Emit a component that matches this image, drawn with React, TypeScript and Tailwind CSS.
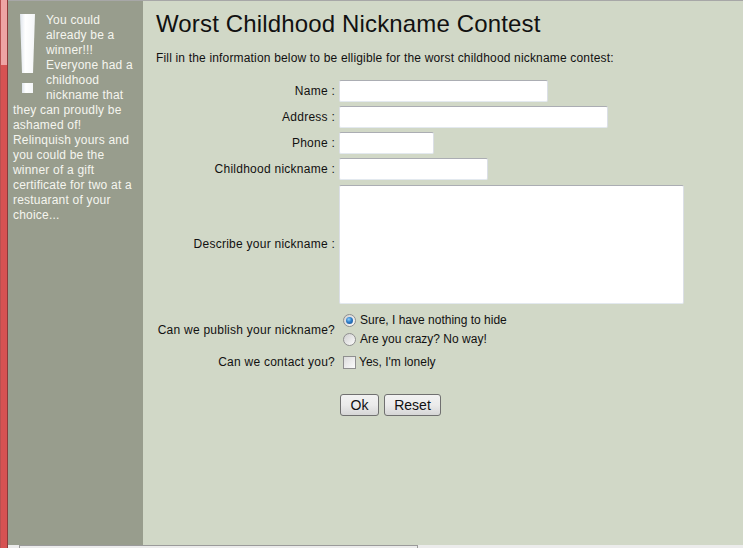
import React from "react";

const inputCls =
  "box-border h-[22px] bg-white border border-t-[#abadb3] border-l-[#dbdfe6] border-r-[#dbdfe6] border-b-[#e3e9ef] rounded-[2px] outline-none";

function Radio({ checked }: { checked?: boolean }) {
  return (
    <span className="ml-[4px] mr-[4px] flex h-[13px] w-[13px] items-center justify-center rounded-full border border-[#8f8f8f] bg-gradient-to-br from-[#d0d0d0] to-[#fbfbfb]">
      {checked && (
        <span className="h-[7px] w-[7px] rounded-full bg-[radial-gradient(circle_at_40%_35%,#8fd0ff_0%,#2d7cc6_45%,#1b4f8c_100%)]" />
      )}
    </span>
  );
}

function Row({ label, children, className = "" }: { label: string; children: React.ReactNode; className?: string }) {
  return (
    <div className={`flex items-center gap-[4px] ${className}`}>
      <div className="w-[179px] text-right text-[12px] leading-[15px] tracking-[0.25px] text-[#111]">{label}</div>
      {children}
    </div>
  );
}

function Bang() {
  return (
    <svg width="33" height="85" viewBox="0 0 33 85" className="float-left">
      <defs>
        <linearGradient id="bang" x1="0" x2="1" y1="0" y2="0">
          <stop offset="0" stopColor="#dfe5ec" />
          <stop offset="0.35" stopColor="#ffffff" />
          <stop offset="1" stopColor="#f4f6f8" />
        </linearGradient>
      </defs>
      <polygon points="7,1 22,1 20,60 9,60" fill="url(#bang)" />
      <rect x="9" y="70" width="11" height="10" fill="url(#bang)" />
    </svg>
  );
}

export default function App() {
  return (
    <div className="flex h-[548px] w-full overflow-hidden font-['Liberation_Sans',Arial,sans-serif]">
      {/* red edge */}
      <div className="flex w-[8px] flex-col border-l border-r border-l-[#b85050] border-r-[#8a3a3a]">
        <div className="h-[65px] bg-[#eea4a4]" />
        <div className="flex-1 bg-[#d65252]" />
      </div>

      <div className="flex flex-1 flex-col">
        <div className="flex flex-1 border-t border-[#a7a7a7]">
          {/* sidebar */}
          <aside className="w-[135px] shrink-0 bg-[#989d8d] pl-[5px] pt-[12px]">
            <div className="w-[124px] text-[12px] leading-[15px] tracking-[0.2px] text-[#f5f5ef]">
              <Bang />
              You could already be a winner!!! Everyone had a childhood nickname that they can proudly be ashamed of!
              Relinquish yours and you could be the winner of a gift certificate for two at a restuarant of your
              choice...
            </div>
          </aside>

          {/* main */}
          <main className="flex-1 bg-[#d1d8c7] pl-[13px] pt-[9px] text-[#111]">
            <h1 className="text-[24px] leading-[28px] font-normal tracking-[0.15px]">Worst Childhood Nickname Contest</h1>
            <p className="mt-[13px] text-[12px] leading-[15px] tracking-[0.17px]">
              Fill in the information below to be elligible for the worst childhood nickname contest:
            </p>

            <form className="mt-[14px] flex flex-col">
              <Row label="Name :">
                <input className={`${inputCls} w-[209px]`} />
              </Row>
              <Row label="Address :" className="mt-[4px]">
                <input className={`${inputCls} w-[269px]`} />
              </Row>
              <Row label="Phone :" className="mt-[4px]">
                <input className={`${inputCls} w-[95px]`} />
              </Row>
              <Row label="Childhood nickname :" className="mt-[4px]">
                <input className={`${inputCls} w-[149px]`} />
              </Row>
              <Row label="Describe your nickname :" className="mt-[5px]">
                <textarea className={`${inputCls} h-[119px] w-[345px] resize-none`} />
              </Row>

              <Row label="Can we publish your nickname?" className="mt-[7px]">
                <div className="flex flex-col text-[12px] leading-[15px]">
                  <label className="flex h-[19px] items-center">
                    <Radio checked />
                    Sure, I have nothing to hide
                  </label>
                  <label className="flex h-[19px] items-center">
                    <Radio />
                    Are you crazy? No way!
                  </label>
                </div>
              </Row>

              <Row label="Can we contact you?" className="mt-[4px]">
                <label className="flex h-[19px] items-center text-[12px] leading-[15px]">
                  <span className="ml-[4px] mr-[3px] h-[13px] w-[13px] border border-[#8f8f8f] bg-gradient-to-br from-[#dcdcdc] to-[#fbfbfb]" />
                  Yes, I'm lonely
                </label>
              </Row>

              <div className="mt-[22px] flex gap-[5px] pl-[184px]">
                <button
                  type="button"
                  className="h-[22px] w-[39px] rounded-[3px] border border-[#707070] bg-gradient-to-b from-[#f2f2f2] via-[#ebebeb] to-[#d6d6d6] text-[14px] leading-[16px] text-[#111]"
                >
                  Ok
                </button>
                <button
                  type="button"
                  className="h-[22px] w-[57px] rounded-[3px] border border-[#707070] bg-gradient-to-b from-[#f2f2f2] via-[#ebebeb] to-[#d6d6d6] text-[14px] leading-[16px] text-[#111]"
                >
                  Reset
                </button>
              </div>
            </form>
          </main>
        </div>

        {/* bottom strip */}
        <div className="flex h-[3px] bg-[#ececec]">
          <div className="ml-[11px] w-[399px] border-t border-x border-[#9a9a9a]" />
        </div>
      </div>
    </div>
  );
}
